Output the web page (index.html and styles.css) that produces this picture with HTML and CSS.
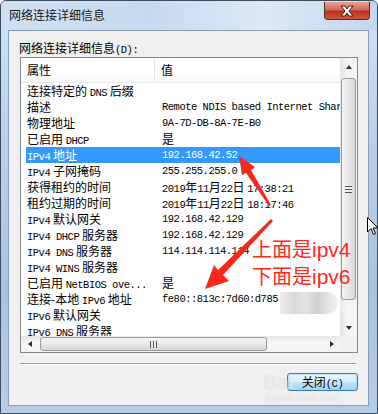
FILE: index.html
```html
<!DOCTYPE html>
<html lang="zh-CN">
  <head>
    <title>网络连接详细信息</title>
    <meta charset="utf-8" />
    <link rel="stylesheet" href="styles.css">
  </head>
  <body>
    <div class="window">
      <div class="titlebar">
        <span class="title">网络连接详细信息</span>
        <div class="close-btn">
          <svg width="18" height="12" viewBox="0 0 18 12">
            <path d="M3 1 L7 1 L9 4 L11 1 L15 1 L11 6 L15 11 L11 11 L9 8 L7 11 L3 11 L7 6 Z" fill="#fff" stroke="#4a1410" stroke-width="1" />
          </svg>
        </div>
      </div>

      <div class="client">
        <div class="label">网络连接详细信息<span class="en">(D):</span></div>

        <div class="listview">
          <div class="lv-top">
            <div class="lv-main">
              <div class="lv-header">
                <div class="hcell first">属性</div>
                <div class="hcell">值</div>
              </div>
              <div class="lv-rows">
                <div class="row"><span>连接特定的 <span class="en">DNS</span> 后缀</span><span></span></div>
                <div class="row"><span>描述</span><span class="en">Remote NDIS based Internet Sharing Device</span></div>
                <div class="row"><span>物理地址</span><span class="en">9A-7D-DB-8A-7E-B0</span></div>
                <div class="row"><span>已启用 <span class="en">DHCP</span></span><span>是</span></div>
                <div class="row selected"><span><span class="en">IPv4</span> 地址</span><span class="en">192.168.42.52</span></div>
                <div class="row"><span><span class="en">IPv4</span> 子网掩码</span><span class="en">255.255.255.0</span></div>
                <div class="row"><span>获得租约的时间</span><span><span class="en">2019</span>年<span class="en">11</span>月<span class="en">22</span>日 <span class="en">17:38:21</span></span></div>
                <div class="row"><span>租约过期的时间</span><span><span class="en">2019</span>年<span class="en">11</span>月<span class="en">22</span>日 <span class="en">18:17:46</span></span></div>
                <div class="row"><span><span class="en">IPv4</span> 默认网关</span><span class="en">192.168.42.129</span></div>
                <div class="row"><span><span class="en">IPv4 DHCP</span> 服务器</span><span class="en">192.168.42.129</span></div>
                <div class="row"><span><span class="en">IPv4 DNS</span> 服务器</span><span class="en">114.114.114.114</span></div>
                <div class="row"><span><span class="en">IPv4 WINS</span> 服务器</span><span></span></div>
                <div class="row"><span>已启用 <span class="en">NetBIOS ove...</span></span><span>是</span></div>
                <div class="row"><span>连接-本地 <span class="en">IPv6</span> 地址</span><span class="en">fe80::813c:7d60:d785</span></div>
                <div class="row"><span><span class="en">IPv6</span> 默认网关</span><span></span></div>
                <div class="row"><span><span class="en">IPv6 DNS</span> 服务器</span><span></span></div>
              </div>
            </div>
            <div class="vscroll">
              <div class="sb-btn"><i class="tri up"></i></div>
              <div class="sb-track">
                <div class="thumb v-thumb"><i class="grip-v"></i></div>
              </div>
              <div class="sb-btn"><i class="tri down"></i></div>
            </div>
          </div>
          <div class="hscroll">
            <div class="sb-btn"><i class="tri left"></i></div>
            <div class="sb-track h">
              <div class="thumb h-thumb"><i class="grip-h"></i></div>
            </div>
            <div class="sb-btn"><i class="tri right"></i></div>
            <div class="sb-corner"></div>
          </div>
        </div>

        <div class="separator"></div>

        <div class="footer">
          <div class="button">关闭<span class="en">(C)</span></div>
        </div>
      </div>

      <!-- marcas vermelhas por cima da captura -->
      <div class="blur"></div>
      <svg class="marks" width="378" height="414" viewBox="0 0 378 414">
        <polygon points="239,156 255,167 251,170 271,205 269,206 246,173 242,175" fill="#f52a1c" />
        <polygon points="205,289 214,265 218,270 271,219 273,221 223,275 229,281" fill="#f52a1c" />
      </svg>
      <div class="note">
        <div>上面是<span class="note-en">ipv4</span></div>
        <div>下面是<span class="note-en">ipv6</span></div>
      </div>
      <div class="watermark">
        <div class="wm-big">Bai</div>
        <div class="wm-small">jingyan.baidu.com</div>
      </div>
      <svg class="cursor" width="12" height="19" viewBox="0 0 12 19">
        <path d="M0.5 0.5 L0.5 15 L4 11.5 L6.5 17.5 L8.5 16.5 L6 11 L11 11 Z" fill="#fff" stroke="#000" stroke-width="1" />
      </svg>
    </div>
  </body>
</html>
```

FILE: styles.css
```css
body {
  margin: 0;
  background: #ffffff;
  font-family: "Noto Sans CJK SC", sans-serif;
  font-size: 12px;
  color: #000;
}

.en {
  font-family: "Liberation Mono", monospace;
  font-size: 10.5px;
  letter-spacing: -0.5px;
}

.window {
  position: relative;
  width: 378px;
  height: 414px;
  box-sizing: border-box;
  border: 1px solid #3c4d5f;
  border-radius: 6px 6px 0 0;
  background: linear-gradient(180deg, #d4e3f3 0%, #bcd2ea 30%, #a9c3df 70%, #b6cde6 100%);
  display: flex;
  flex-direction: column;
  overflow: hidden;
}

/* barra de titulo */
.titlebar {
  height: 29px;
  display: flex;
  align-items: flex-start;
  justify-content: space-between;
  background: linear-gradient(90deg, #cfe0f2 0%, #c6daef 40%, #dce9f6 70%, #c3d7ec 100%);
}

.title {
  margin: 6px 0 0 8px;
  line-height: 16px;
  color: #1a1a1a;
}

.close-btn {
  width: 46px;
  height: 18px;
  margin: 1px 7px 0 0;
  box-sizing: border-box;
  border: 1px solid #5b2a26;
  border-top: none;
  border-radius: 0 0 4px 4px;
  background: linear-gradient(180deg, #e8a195 0%, #d46a5a 45%, #b8301f 55%, #cf5a3e 100%);
  display: flex;
  align-items: center;
  justify-content: center;
}

/* area cliente */
.client {
  flex: 1;
  margin: 0 8px 7px 7px;
  border: 1px solid #8a9db3;
  background: #f0f0f0;
  display: flex;
  flex-direction: column;
}

.label {
  height: 17px;
  padding: 9px 0 0 10px;
  line-height: 15px;
}

.listview {
  margin-left: 11px;
  width: 338px;
  height: 296px;
  box-sizing: border-box;
  border: 1px solid #828790;
  background: #fff;
  display: flex;
  flex-direction: column;
}

.lv-top {
  flex: 1;
  display: flex;
  min-height: 0;
}

.lv-main {
  flex: 1;
  display: flex;
  flex-direction: column;
  overflow: hidden;
}

.lv-header {
  height: 24px;
  display: flex;
  border-bottom: 1px solid #eaeaea;
  background: linear-gradient(180deg, #ffffff 0%, #ffffff 60%, #f7f8fa 100%);
  line-height: 24px;
}

.hcell {
  padding-left: 6px;
}

.hcell.first {
  width: 127px;
  border-right: 1px solid #e3e5e8;
}

.lv-rows {
  flex: 1;
  overflow: hidden;
}

.row {
  height: 16px;
  line-height: 16px;
  margin-left: 5px;
  display: grid;
  grid-template-columns: 129px 1fr;
  white-space: nowrap;
  overflow: hidden;
}

.row > span:first-child {
  padding-left: 1px;
}

.row > span:last-child {
  padding-left: 7px;
  overflow: hidden;
}

.row.selected {
  background: #3399ff;
  color: #fff;
}

/* barras de rolagem */
.vscroll {
  width: 17px;
  display: flex;
  flex-direction: column;
  background: linear-gradient(90deg, #e6e6e6 0%, #f4f4f4 40%, #f4f4f4 100%);
}

.sb-btn {
  width: 17px;
  height: 17px;
  display: flex;
  align-items: center;
  justify-content: center;
  flex-shrink: 0;
}

.sb-track {
  flex: 1;
  padding: 3px 1px 0 1px;
}

.sb-track.h {
  padding: 1px 0 1px 2px;
}

.thumb {
  box-sizing: border-box;
  border: 1px solid #9a9a9a;
  border-radius: 3px;
  display: flex;
  align-items: center;
  justify-content: center;
}

.v-thumb {
  height: 222px;
  background: linear-gradient(90deg, #f4f4f4 0%, #e8e8e8 50%, #d8d8d8 100%);
}

.h-thumb {
  width: 227px;
  height: 14px;
  background: linear-gradient(180deg, #f4f4f4 0%, #e8e8e8 50%, #d6d6d6 100%);
}

.grip-v {
  width: 7px;
  height: 7px;
  background: repeating-linear-gradient(180deg, #555 0px, #555 1px, #eee 1px, #eee 3px);
}

.grip-h {
  width: 7px;
  height: 7px;
  background: repeating-linear-gradient(90deg, #555 0px, #555 1px, #eee 1px, #eee 3px);
}

.hscroll {
  height: 16px;
  display: flex;
  background: linear-gradient(180deg, #e6e6e6 0%, #f4f4f4 40%, #f4f4f4 100%);
}

.hscroll .sb-btn {
  height: 16px;
}

.hscroll .sb-track {
  flex: 1;
}

.sb-corner {
  width: 17px;
  background: #f0f0f0;
}

.tri {
  width: 0;
  height: 0;
  border: 3px solid transparent;
}

.tri.up {
  border-bottom: 4px solid #333;
  border-top: none;
}

.tri.down {
  border-top: 4px solid #333;
  border-bottom: none;
}

.tri.left {
  border-right: 4px solid #333;
  border-left: none;
}

.tri.right {
  border-left: 4px solid #333;
  border-right: none;
}

.separator {
  margin: 10px 0 0 11px;
  width: 336px;
  border-top: 1px solid #a0a0a0;
  border-bottom: 1px solid #ffffff;
}

.footer {
  display: flex;
  justify-content: flex-end;
  padding: 8px 10px 0 0;
}

.button {
  width: 71px;
  height: 18px;
  box-sizing: border-box;
  border: 1px solid #3c7fb1;
  border-radius: 3px;
  box-shadow: 0 0 2px #5ec3f2 inset, 0 0 1px #8fd3f5;
  background: linear-gradient(180deg, #e9f6fd 0%, #d8effb 50%, #bde4f8 51%, #a7d9f5 100%);
  text-align: center;
  line-height: 16px;
}

/* sobreposicoes */
.marks {
  position: absolute;
  left: -1px;
  top: -1px;
}

.blur {
  position: absolute;
  left: 279px;
  top: 291px;
  width: 58px;
  height: 22px;
  border-radius: 0 11px 11px 0;
  background: linear-gradient(90deg, #eeeeee 0%, #d9d9d9 25%, #e4e4e4 45%, #cfcfcf 65%, #e6e6e6 85%, #f4f4f4 100%);
}

.note {
  position: absolute;
  left: 251px;
  top: 235px;
  color: #ff2a1f;
  font-size: 20px;
  line-height: 26px;
}

.note-en {
  font-family: "Liberation Sans", sans-serif;
  font-size: 21px;
}

.watermark {
  position: absolute;
  left: 262px;
  top: 370px;
  color: rgba(255, 255, 255, 0.55);
  text-shadow: 0 0 1px rgba(150, 150, 150, 0.35);
  font-family: "Liberation Sans", sans-serif;
}

.wm-big {
  font-size: 20px;
  font-weight: bold;
  line-height: 22px;
}

.wm-small {
  font-size: 9px;
  line-height: 10px;
  margin-left: 2px;
}

.cursor {
  position: absolute;
  left: 366px;
  top: 216px;
}
```
